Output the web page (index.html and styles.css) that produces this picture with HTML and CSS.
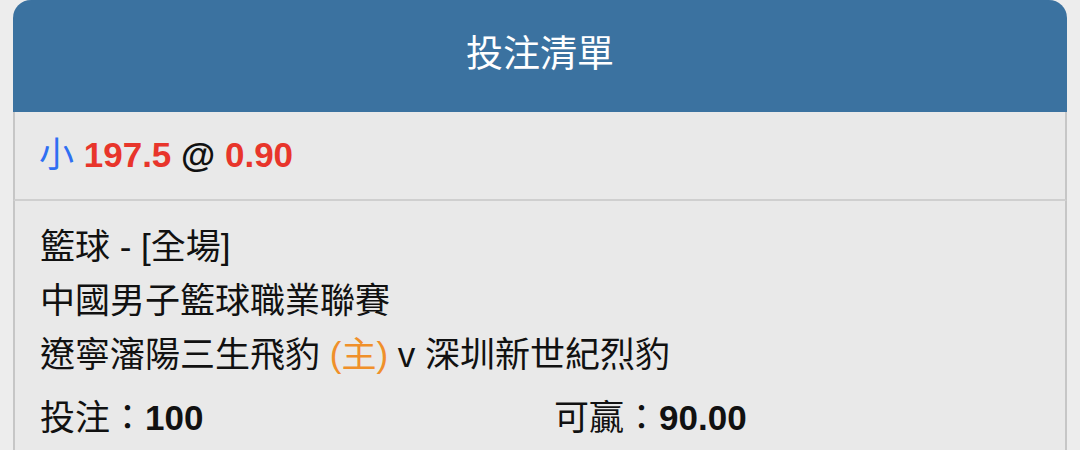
FILE: index.html
```html
<!DOCTYPE html>
<html lang="zh-Hant">
<head>
    <meta charset="UTF-8">
    <meta name="viewport" content="width=device-width, initial-scale=1.0">
    <title>投注清單</title>
    <link rel="stylesheet" href="styles.css">
</head>
<body>
    <div class="slip">
        <div class="slip-header">投注清單</div>

        <!-- Selection -->
        <div class="selection">
            <span class="side">小</span>
            <span class="odds">197.5</span>
            <span class="at">@</span>
            <span class="odds">0.90</span>
        </div>

        <!-- Match details -->
        <div class="details">
            <div class="line">籃球 - [全場]</div>
            <div class="line">中國男子籃球職業聯賽</div>
            <div class="line">遼寧瀋陽三生飛豹 <span class="home">(主)</span> v 深圳新世紀烈豹</div>

            <div class="amounts">
                <div>投注：<b>100</b></div>
                <div>可贏：<b>90.00</b></div>
            </div>
        </div>
    </div>
</body>
</html>
```

FILE: styles.css
```css
body {
    margin: 0;
    padding: 0 13px;
    background-color: #ededed;
    font-family: "Liberation Sans", "Noto Sans CJK TC", sans-serif;
    color: #111;
}

.slip {
    background: #e9e9e9;
    border-radius: 18px 18px 0 0;
    overflow: hidden;
}

.slip-header {
    background-color: #3b72a0;
    color: #ffffff;
    text-align: center;
    font-size: 37px;
    height: 112px;
    line-height: 110px;
}

.selection {
    padding: 16px 25px 17px 24px;
    font-size: 35px;
    line-height: 54px;
    font-weight: bold;
    border-left: 2px solid #c6c6c6;
    border-right: 2px solid #c6c6c6;
    border-bottom: 2px solid #cfcfcf;
}

.selection .side {
    color: #2f6ff2;
    font-weight: normal;
}

.selection .odds {
    color: #e8352b;
}

.selection .at {
    color: #111;
}

.details {
    padding: 19px 25px 20px;
    font-size: 35px;
    line-height: 54px;
    border-left: 2px solid #c6c6c6;
    border-right: 2px solid #c6c6c6;
}

.home {
    color: #f0902a;
}

.amounts {
    display: grid;
    grid-template-columns: 514px 1fr;
    margin-top: 9px;
}

.amounts b {
    font-weight: bold;
}
```
